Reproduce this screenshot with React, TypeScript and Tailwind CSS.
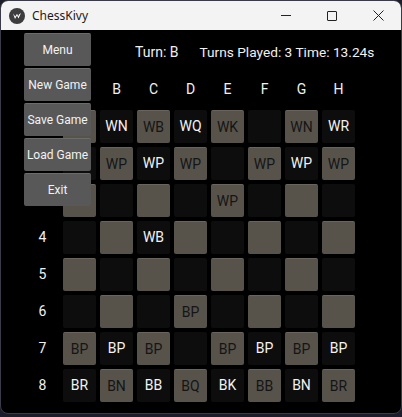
import React from "react";

const cols = ["A", "B", "C", "D", "E", "F", "G", "H"];
const board: string[][] = [
  ["WR", "WN", "WB", "WQ", "WK", "", "WN", "WR"],
  ["WP", "WP", "WP", "WP", "", "WP", "WP", "WP"],
  ["", "", "", "", "WP", "", "", ""],
  ["", "", "WB", "", "", "", "", ""],
  ["", "", "", "", "", "", "", ""],
  ["", "", "", "BP", "", "", "", ""],
  ["BP", "BP", "BP", "", "BP", "BP", "BP", "BP"],
  ["BR", "BN", "BB", "BQ", "BK", "BB", "BN", "BR"],
];

const font = { fontFamily: "Roboto, 'Liberation Sans', sans-serif" };

function Cell({ light, text }: { light: boolean; text: string }) {
  return light ? (
    <div className="w-[33px] h-[33px] rounded-[2px] bg-[#57534b] border-t border-[#6a655c] flex items-center justify-center text-[14px] text-[#151515]">
      {text}
    </div>
  ) : (
    <div className="w-[33px] h-[33px] rounded-[2px] bg-[#0d0d0d] flex items-center justify-center text-[14px] text-[#f2f2f2]">
      {text}
    </div>
  );
}

export default function App() {
  const menu = ["Menu", "New Game", "Save Game", "Load Game", "Exit"];
  return (
    <div className="w-[402px] h-[417px] bg-[#1c1c2a] overflow-hidden relative">
      <div className="w-[402px] h-[414px] rounded-[8px] border border-[#3a3a48] overflow-hidden flex flex-col bg-black">
        {/* title bar */}
        <div
          className="h-[29px] bg-[#f3f3f3] flex items-center shrink-0"
          style={{ fontFamily: "'Noto Sans', 'Open Sans', sans-serif" }}
        >
          <svg width="16" height="16" viewBox="0 0 16 16" className="ml-[8px]">
            <circle cx="8" cy="8" r="8" fill="#3d3d3d" />
            <path d="M4 5.5 L6 11 L8 7.5 L9.5 10.5 L12 5 L10 6.5 L9.3 8.2 L8 5.8 L6.3 8.6 Z" fill="#ffffff" />
          </svg>
          <span className="ml-[7px] text-[12px] text-[#1a1a1a]">ChessKivy</span>
          <div className="ml-auto flex items-center h-full">
            <div className="w-[46px] h-full flex items-center justify-center">
              <div className="w-[10px] h-px bg-[#222]" />
            </div>
            <div className="w-[46px] h-full flex items-center justify-center">
              <div className="w-[10px] h-[10px] border border-[#222] rounded-[1px]" />
            </div>
            <div className="w-[46px] h-full flex items-center justify-center">
              <svg width="11" height="11" viewBox="0 0 11 11">
                <path d="M0.5 0.5 L10.5 10.5 M10.5 0.5 L0.5 10.5" stroke="#222" strokeWidth="1" />
              </svg>
            </div>
          </div>
        </div>
        {/* content */}
        <div className="relative flex-1 pt-[6px] pl-[25px]" style={font}>
          <div className="h-[33px] flex items-center text-[14px] text-[#f0f0f0]">
            <span className="ml-[109px]">Turn: B</span>
            <span className="ml-[21px] text-[13.7px]">Turns Played: 3 Time: 13.24s</span>
          </div>
          <div className="mt-[4px] grid grid-cols-[repeat(9,33px)] auto-rows-[33px] gap-[4px]">
            <div />
            {cols.map((c) => (
              <div key={c} className="flex items-center justify-center text-[14px] text-[#f0f0f0]">
                {c}
              </div>
            ))}
            {board.map((row, r) => (
              <React.Fragment key={r}>
                <div className="flex items-center justify-center text-[14px] text-[#f0f0f0]">{r + 1}</div>
                {row.map((t, c) => (
                  <Cell key={c} light={(r + c) % 2 === 0} text={t} />
                ))}
              </React.Fragment>
            ))}
          </div>
          {/* dropdown menu */}
          <div className="absolute left-[23px] top-[3px] flex flex-col gap-[2px]">
            {menu.map((m) => (
              <div
                key={m}
                className="w-[67px] h-[33px] rounded-[2px] bg-[#585858] border-t border-[#6c6c6c] flex items-center justify-center text-[12px] text-[#f2f2f2]"
              >
                {m}
              </div>
            ))}
          </div>
        </div>
      </div>
    </div>
  );
}
